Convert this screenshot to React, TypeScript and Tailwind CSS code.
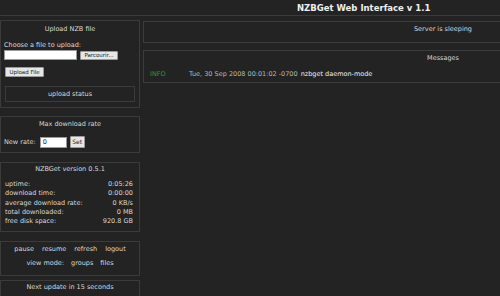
export default function App() {
  const stats = [
    ['uptime:', '0:05:26'],
    ['download time:', '0:00:00'],
    ['average download rate:', '0 KB/s'],
    ['total downloaded:', '0 MB'],
    ['free disk space:', '920.8 GB'],
  ]

  return (
    <div
      className="w-[500px] h-[296px] overflow-hidden bg-[#232323] text-[#d9d9d9] text-[6.5px] leading-[8px]"
      style={{ fontFamily: '"DejaVu Sans", Verdana, sans-serif' }}
    >
      {/* header */}
      <div className="h-[16px] border-b border-[#3b3b3b] pl-[297px] pt-[3px] text-[8.5px] leading-[10px] font-bold text-[#f0f0f0] whitespace-nowrap">
        NZBGet Web Interface v 1.1
      </div>

      <div className="flex pt-[4px]">
        {/* left column */}
        <div className="w-[140px] shrink-0 flex flex-col">
          <div className="h-[88px] border border-[#3b3b3b] pt-[4px]">
            <div className="text-center">Upload NZB file</div>
            <div className="mt-[8px] pl-[3px]">Choose a file to upload:</div>
            <div className="mt-[1px] pl-[3px] flex items-center gap-[3px]">
              <div className="w-[73px] h-[10px] bg-white border border-[#9a9a9a]" />
              <button className="w-[38px] h-[9px] bg-[#e6e6e6] border border-[#9a9a9a] text-[#222] text-[5.5px] leading-[7px] rounded-[1px]">
                Parcourir...
              </button>
            </div>
            <button className="mt-[7px] ml-[4px] w-[39px] h-[10px] bg-[#e6e6e6] border border-[#9a9a9a] text-[#222] text-[5.5px] leading-[8px] rounded-[1px]">
              Upload File
            </button>
            <div className="mt-[9px] mx-[4px] h-[16px] border border-[#3b3b3b] text-center pt-[3px]">
              upload status
            </div>
          </div>

          <div className="mt-[8px] h-[37px] border border-[#3b3b3b] pt-[3px]">
            <div className="text-center">Max download rate</div>
            <div className="mt-[8px] pl-[3px] flex items-center h-[12px]">
              <span>New rate:</span>
              <div className="ml-[4px] w-[27px] h-[11px] bg-white border border-[#9a9a9a] text-[#222] pl-[2px] leading-[9px]">0</div>
              <button className="ml-[3px] w-[15px] h-[12px] bg-[#e6e6e6] border border-[#9a9a9a] text-[#222] text-[6px] leading-[10px] rounded-[1px]">
                Set
              </button>
            </div>
          </div>

          <div className="mt-[9px] h-[70px] border border-[#3b3b3b] pt-[2px]">
            <div className="text-center">NZBGet version 0.5.1</div>
            <div className="mt-[7px] pl-[4px] pr-[6px] leading-[9.25px]">
              {stats.map(([k, v]) => (
                <div key={k} className="flex justify-between">
                  <span>{k}</span>
                  <span>{v}</span>
                </div>
              ))}
            </div>
          </div>

          <div className="mt-[9px] h-[35px] border border-[#3b3b3b] pt-[3px]">
            <div className="flex justify-center gap-[8px]">
              <span>pause</span>
              <span>resume</span>
              <span>refresh</span>
              <span>logout</span>
            </div>
            <div className="mt-[6px] flex justify-center gap-[7px]">
              <span>view mode:</span>
              <span>groups</span>
              <span>files</span>
            </div>
          </div>

          <div className="mt-[4px] h-[30px] border border-[#3b3b3b] pt-[2px] text-center">
            Next update in 15 seconds
          </div>
        </div>

        {/* right column */}
        <div className="ml-[3px] w-[600px] shrink-0 flex flex-col">
          <div className="mt-[1px] h-[22px] border border-[#3b3b3b] pt-[3px] text-center">
            Server is sleeping
          </div>
          <div className="mt-[7px] h-[33px] border border-[#3b3b3b] pt-[3px]">
            <div className="text-center">Messages</div>
            <div className="mt-[8px] flex pl-[6px] whitespace-nowrap">
              <span className="w-[39px] text-[#2f9a2f]">INFO</span>
              <span className="text-[#b8b8b8]">Tue, 30 Sep 2008 00:01:02 -0700</span>
              <span className="ml-[3px] text-[#f2f2f2]">nzbget daemon-mode</span>
            </div>
          </div>
        </div>
      </div>
    </div>
  )
}
